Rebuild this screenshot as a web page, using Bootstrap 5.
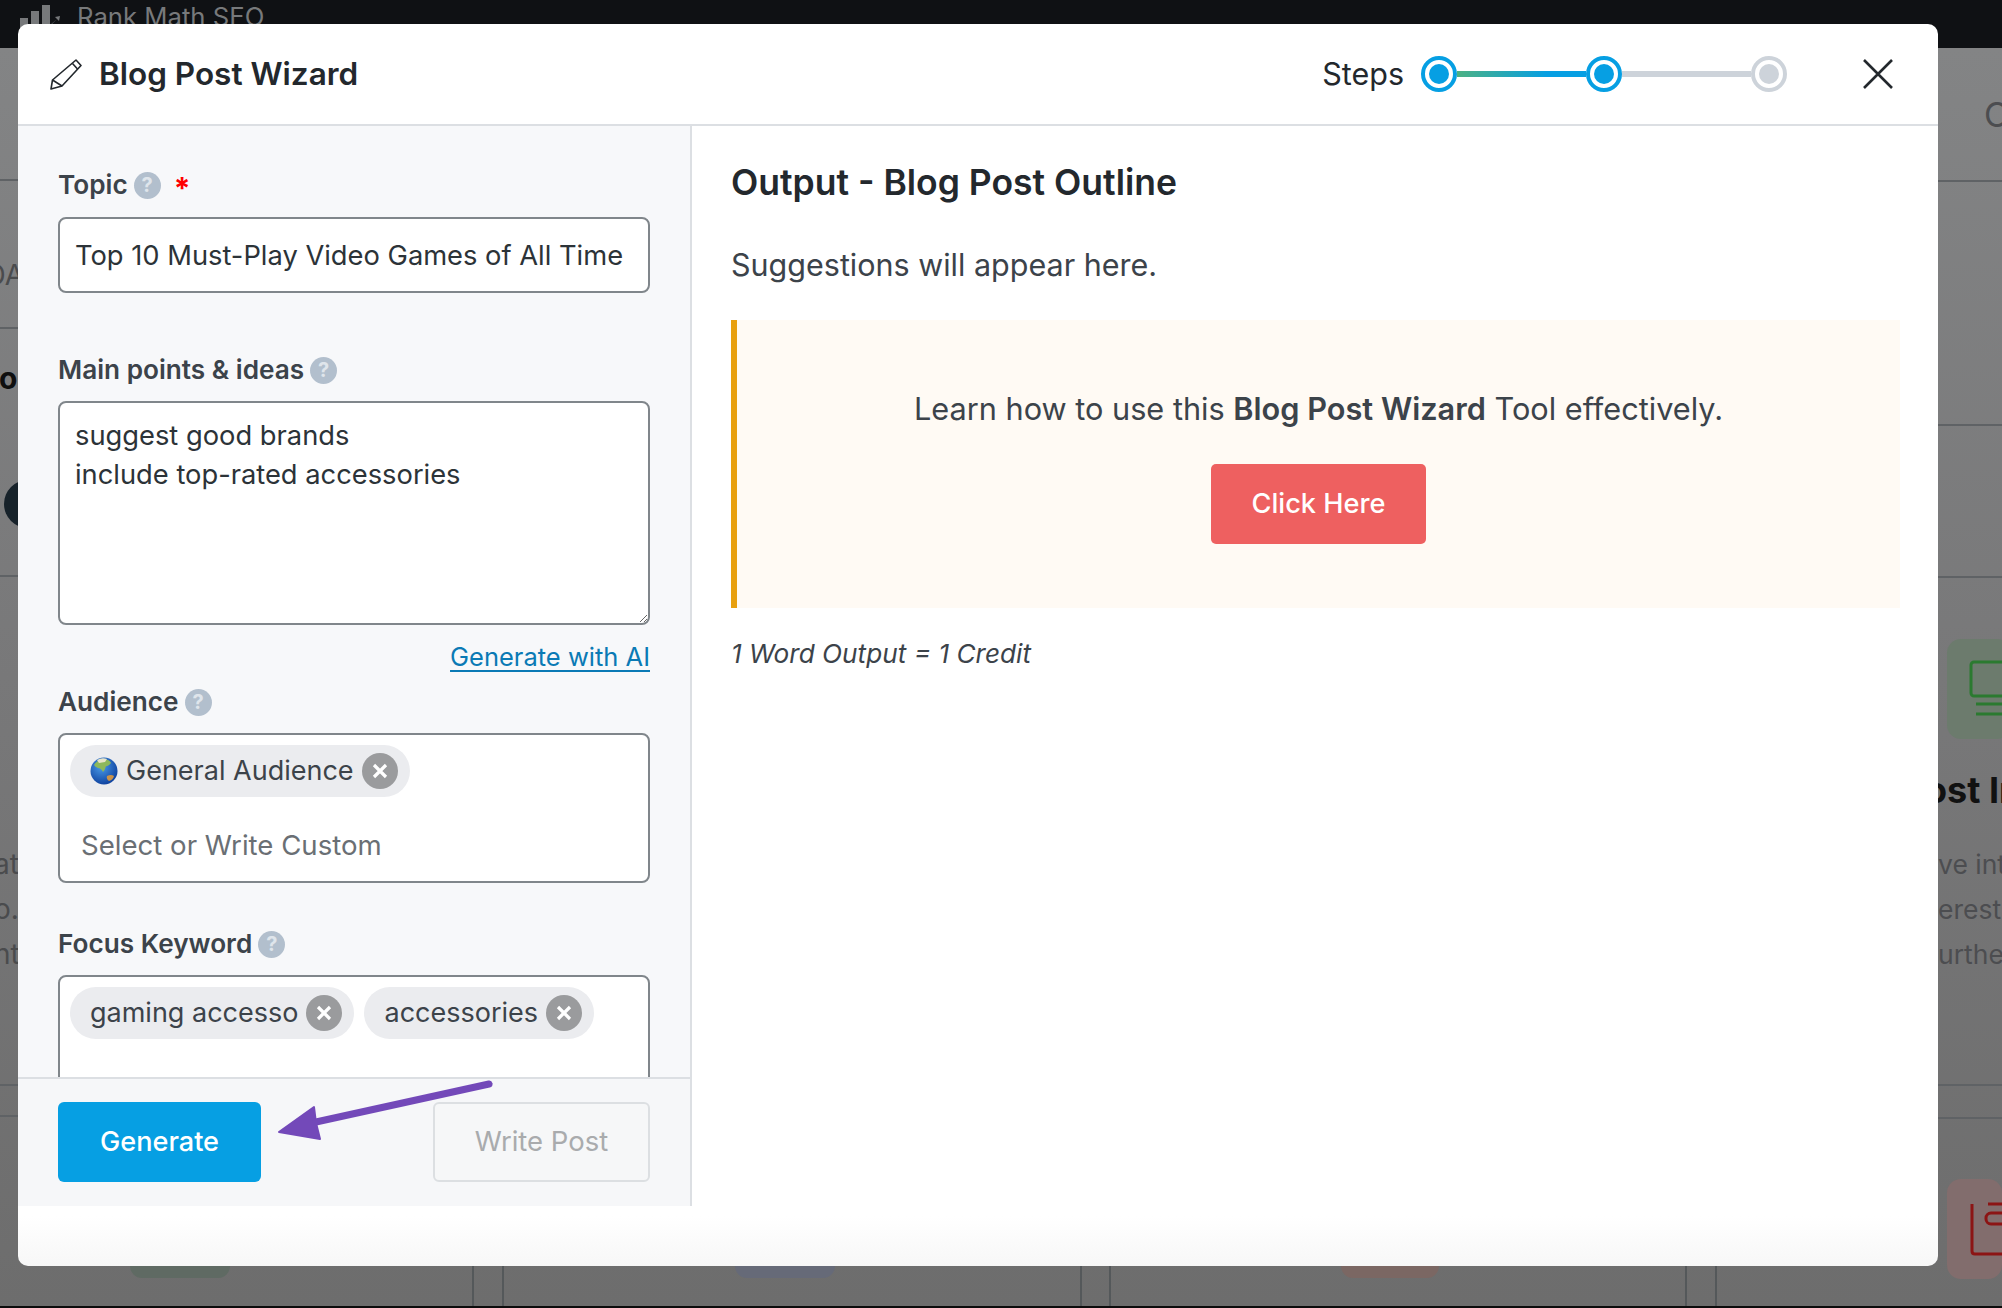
<!doctype html>
<html lang="en">
<head>
<meta charset="utf-8">
<title>Blog Post Wizard</title>
<link href="https://cdn.jsdelivr.net/npm/bootstrap@5.3.0/dist/css/bootstrap.min.css" rel="stylesheet">
<style>
html,body{margin:0;height:1308px;overflow:hidden;background:#000;font-family:Inter,"Liberation Sans",sans-serif;color:#3c434a}
.stage{width:2002px;height:1308px;position:relative;overflow:hidden}
.topstrip{height:48px;background:#0f1114;color:#77797b;padding-left:20px;gap:17px;font-size:25.7px;line-height:34px}
.page{height:1258px;background:linear-gradient(180deg,#838485 0%,#787879 50%,#6d6d6d 100%)}
.leftcol{width:24px;flex:none;overflow:hidden;color:#4a4b4d}
.midcol{flex:1 1 auto;min-width:0}
.rightcol{width:64px;flex:none;overflow:hidden;color:#4c4d50}
.sect{border-bottom:2px solid #5f6265;overflow:hidden;white-space:nowrap;flex:none}
.darkdot{width:48px;height:48px;border-radius:50%;background:#17222a;margin:84px 0 0 4px}
.boldfrag{font-weight:700;color:#0f0f0f;font-size:30px;line-height:36px;margin:31px 0 0 -1px}
.fragtxt{font-size:28px;line-height:45px;margin:0}
.fragwide{font-size:26.5px;padding-top:30px}
.tile{border-radius:14px;height:100px;width:100%}
.tile-green{background:#6c7b6d}
.tile-red{background:#826d6d}
.tailgrid{display:grid;grid-template-columns:448px 32px 576px 31px 574px 32px 1fr;height:40px;margin-top:auto}
.gapcell{border-left:2px solid #54585a;border-right:2px solid #54585a}
.tab-a,.tab-b,.tab-c{height:12px;border-radius:0 0 12px 12px;width:100px}
.tab-a{background:#5f6a63;margin-left:106px}
.tab-b{background:#666a78;margin-left:231px}
.tab-c{background:#7b6763;margin-left:230px;width:98px}
.wizard-modal{position:absolute;left:18px;top:24px;width:1920px;height:1242px;border:0;border-radius:10px;background:linear-gradient(180deg,#fff 96%,#f7f7f7 100%);overflow:hidden;display:block;color:#3c434a}
.wizard-head{height:102px;border-bottom:2px solid #dcdfe3;padding:0 44px 0 32px;border-radius:0}
.wizard-title{font-size:31.5px;font-weight:600;color:#23282d;margin:0 0 0 17px;line-height:40px}
.steps-label{font-size:30.5px;color:#23282d;margin-right:17px}
.stepdot{width:36px;height:36px;flex:none;border-radius:50%;border:4px solid #069fe3;background:#fff;padding:4px}
.stepdot::after{content:"";display:block;width:20px;height:20px;border-radius:50%;background:#069fe3}
.stepdot.todo{border-color:#cdd3da}
.stepdot.todo::after{background:#cdd3da}
.stepline{width:129px;height:6px;flex:none}
.stepline.done{background:linear-gradient(90deg,#4cb184,#069fe3 70%)}
.stepline.todo{background:#cdd3da}
.closer{margin-left:75px;width:32px;height:32px;background:none;border:0;padding:0;line-height:0}
.wizard-body{height:1080px}
.leftpane{width:674px;flex:none;background:#f7f8fa;border-right:2px solid #dcdfe3}
.scrollarea{height:951px;overflow:hidden;padding:44px 40px 0}
.fieldlabel{font-size:26.2px;font-weight:600;line-height:30px;color:#3c434a;margin:0;gap:6px}
.qmark{width:27px;height:27px;border-radius:50%;background:#b2bfcd;color:#dfe5eb;font-size:20px;font-weight:700;line-height:27px;text-align:center;flex:none}
.reqstar{color:#f00;font-size:30px;font-weight:700;line-height:30px;margin-left:7px;height:24px}
.wiz-input{height:76px;font-size:27.3px;line-height:38.5px;padding:15px 15px;border:2px solid #80868b;border-radius:8px;color:#2c3338;background:#fff;width:592px}
.wiz-area{height:224px;padding:14px 15px;margin-top:16px}
.mt-18{margin-top:17px}
.genlink{font-size:25.5px;line-height:30px;margin-top:17px;color:#0a7ab5;text-align:right;text-decoration:underline;display:block;text-underline-offset:4px}
.tagbox{border:2px solid #80868b;border-radius:8px;background:#fff;width:592px;padding:10px;font-size:27px;margin-top:16px}
.tagbox-tall{height:150px}
.tagrow{gap:10px}
.chip-tag{height:52px;border-radius:26px;background:#ebecef;padding:0 12px 0 20px;gap:8px;color:#3c434a;line-height:52px}
.chip-x{width:36px;height:36px;border-radius:50%;background:#9a9b9d;flex:none;line-height:0}
.placeholder-txt{color:#6a6f74;margin:28px 0 0 11px;line-height:40px;font-size:27.6px}
.leftfoot{border-top:2px solid #dcdfe3;background:#f6f7f9;padding:23px 40px 0;height:129px}
.btn-gen,.btn-gen:hover{width:203px;height:80px;background:#069fe3;color:#fff;border:0;border-radius:6px;font-size:27.1px;font-weight:500;padding:0}
.btn-write,.btn-write:disabled{width:217px;height:80px;background:#f6f7f8;color:#a9abad;border:2px solid #dcdfe2;border-radius:6px;font-size:27.5px;padding:0;opacity:1}
.rightpane{flex:1 1 auto;padding:35px 38px 0 39px}
.outhead{font-size:35.5px;font-weight:600;line-height:44px;color:#23282d;margin:0 0 39px}
.outsub{font-size:30.5px;line-height:42px;margin:0 0 34px;color:#3c434a}
.callout{height:288px;background:#fffaf4;border-left:6px solid #e8a00f;padding-top:71px}
.callout-txt{font-size:30.7px;line-height:36px;margin:0 0 37px;color:#3c434a}
.callout-txt b{font-weight:600}
.btn-click,.btn-click:hover{width:215px;height:80px;background:#ee6060;color:#fff;border:0;border-radius:5px;font-size:27.2px;font-weight:500;padding:0}
.note{font-size:26.2px;font-style:italic;line-height:34px;margin:29px 0 0;color:#3c434a}
.arrowlay{position:absolute;left:270px;top:1075px;width:230px;height:70px;pointer-events:none}
.darkend{height:2px;background:#0c0c0c}
</style>
</head>
<body>
<div class="stage">
  <div class="topstrip d-flex align-items-start">
    <svg width="40" height="30" viewBox="0 0 40 30" fill="#77797b"><rect x="0" y="18" width="8" height="12"/><rect x="11" y="11" width="8" height="19"/><rect x="22" y="5" width="8" height="25"/><path d="M29 26l8-7-2-2 5-1-1 5-2-2-8 8z"/></svg>
    <span>Rank Math SEO</span>
  </div>
  <div class="page d-flex">
    <div class="leftcol d-flex flex-column">
      <div class="sect" style="height:133px"></div>
      <div class="sect d-flex justify-content-end" style="height:148px"><span class="fragtxt" style="padding-top:72px">DA</span></div>
      <div class="sect d-flex flex-column" style="height:248px"><div class="boldfrag">o</div><div class="darkdot"></div></div>
      <div class="sect" style="height:509px"><p class="fragtxt" style="padding-top:265px;margin-left:-6px">at<br>o.<br>nt</p></div>
      <div class="sect" style="height:31px"></div>
    </div>
    <div class="midcol d-flex flex-column">
      <div class="tailgrid">
        <div><div class="tab-a"></div></div><div class="gapcell"></div>
        <div><div class="tab-b"></div></div><div class="gapcell"></div>
        <div><div class="tab-c"></div></div><div class="gapcell"></div><div></div>
      </div>
    </div>
    <div class="rightcol d-flex flex-column">
      <div class="sect" style="height:134px"><span class="fragtxt d-block" style="padding:44px 0 0 46px;font-size:34px;line-height:46px">C</span></div>
      <div class="sect" style="height:244px"></div>
      <div class="sect" style="height:152px"></div>
      <div class="sect" style="height:508px">
        <div class="tile tile-green" style="margin:61px 0 0 9px">
          <svg width="55" height="100" viewBox="0 0 55 100" fill="none" stroke="#2b7a30" stroke-width="3"><rect x="24" y="23" width="60" height="34" rx="3"/><path d="M29 65h30M29 75h30"/></svg>
        </div>
        <div style="font-weight:700;color:#111;font-size:36px;line-height:44px;margin:29px 0 0 -13px">ost In</div>
        <p class="fragtxt fragwide">ve int<br>erest,<br>urthe</p>
      </div>
      <div class="sect" style="height:33px"></div>
      <div style="padding:60px 0 0 9px"><div class="tile tile-red">
        <svg width="55" height="100" viewBox="0 0 55 100" fill="none" stroke="#8c1414" stroke-width="3"><path d="M25 25v47q0 3 3 3h30M41 25h30"/><rect x="39" y="34" width="40" height="11" rx="5"/></svg>
      </div></div>
    </div>
  </div>
  <div class="darkend"></div>

  <div class="wizard-modal modal-content">
    <div class="wizard-head d-flex align-items-center">
      <svg width="32" height="32" viewBox="0 0 32 32" fill="none" stroke="#23282d" stroke-width="1.6" stroke-linejoin="round"><path d="M1 31l1.5-9L26 2l5 5.500L12 28z"/><path d="M22.500 5.500l5 5.500M2.500 22l9.500 6"/></svg>
      <h1 class="wizard-title">Blog Post Wizard</h1>
      <div class="ms-auto d-flex align-items-center">
        <span class="steps-label">Steps</span>
        <span class="stepdot"></span><span class="stepline done"></span>
        <span class="stepdot"></span><span class="stepline todo"></span>
        <span class="stepdot todo"></span>
        <button class="closer" type="button" aria-label="Close"><svg width="32" height="32" viewBox="0 0 32 32" stroke="#23282d" stroke-width="2.6"><path d="M2 2l28 28M30 2L2 30"/></svg></button>
      </div>
    </div>
    <div class="wizard-body d-flex">
      <div class="leftpane d-flex flex-column">
        <div class="scrollarea">
          <div class="fieldlabel d-flex align-items-center">Topic <span class="qmark">?</span><span class="reqstar">*</span></div>
          <input class="form-control wiz-input mt-18" value="Top 10 Must-Play Video Games of All Time">
          <div class="fieldlabel d-flex align-items-center" style="margin-top:62px">Main points &amp; ideas <span class="qmark">?</span></div>
          <textarea class="form-control wiz-input wiz-area">suggest good brands
include top-rated accessories</textarea>
          <a class="genlink" href="#">Generate with AI</a>
          <div class="fieldlabel d-flex align-items-center" style="margin-top:15px">Audience <span class="qmark">?</span></div>
          <div class="tagbox tagbox-tall">
            <div class="d-flex tagrow">
              <span class="chip-tag d-inline-flex align-items-center">
                <svg width="28" height="28" viewBox="0 0 28 28"><defs><radialGradient id="sea" cx="40%" cy="35%" r="70%"><stop offset="0" stop-color="#4a9be8"/><stop offset="1" stop-color="#0c3e9c"/></radialGradient></defs><circle cx="14" cy="14" r="13.5" fill="url(#sea)"/><path d="M4 8q4-6 11-6 5 1 6 4-3 4-5 3-1 4-3 6-2-4-5-4-3-1-4-3z" fill="#8db85a"/><path d="M7 3q5-3 10-1l-2 3-6 1z" fill="#e8e4c8"/><path d="M17 19q4-2 7 0-1 4-5 5-3-2-2-5z" fill="#c9924a"/></svg>
                General Audience
                <span class="chip-x d-inline-flex align-items-center justify-content-center"><svg width="16" height="16" viewBox="0 0 16 16" stroke="#fff" stroke-width="3.2"><path d="M2 2l12 12M14 2L2 14"/></svg></span>
              </span>
            </div>
            <div class="placeholder-txt">Select or Write Custom</div>
          </div>
          <div class="fieldlabel d-flex align-items-center" style="margin-top:46px">Focus Keyword <span class="qmark">?</span></div>
          <div class="tagbox" style="height:200px">
            <div class="d-flex tagrow">
              <span class="chip-tag d-inline-flex align-items-center">gaming accesso
                <span class="chip-x d-inline-flex align-items-center justify-content-center"><svg width="16" height="16" viewBox="0 0 16 16" stroke="#fff" stroke-width="3.2"><path d="M2 2l12 12M14 2L2 14"/></svg></span></span>
              <span class="chip-tag d-inline-flex align-items-center">accessories
                <span class="chip-x d-inline-flex align-items-center justify-content-center"><svg width="16" height="16" viewBox="0 0 16 16" stroke="#fff" stroke-width="3.2"><path d="M2 2l12 12M14 2L2 14"/></svg></span></span>
            </div>
          </div>
        </div>
        <div class="leftfoot d-flex justify-content-between align-items-start">
          <button class="btn btn-gen" type="button">Generate</button>
          <button class="btn btn-write" type="button" disabled>Write Post</button>
        </div>
      </div>
      <div class="rightpane">
        <h2 class="outhead">Output - Blog Post Outline</h2>
        <p class="outsub">Suggestions will appear here.</p>
        <div class="callout d-flex flex-column align-items-center">
          <p class="callout-txt">Learn how to use this <b>Blog Post Wizard</b> Tool effectively.</p>
          <button class="btn btn-click" type="button">Click Here</button>
        </div>
        <p class="note">1 Word Output = 1 Credit</p>
      </div>
    </div>
  </div>

  <svg class="arrowlay" viewBox="0 0 230 70"><path d="M9 57L44 32l2 16 4 16z" fill="#7349b9" stroke="#7349b9" stroke-width="2" stroke-linejoin="round"/><path d="M46 47L219 9" stroke="#7349b9" stroke-width="7" stroke-linecap="round"/></svg>
</div>
<script src="https://cdn.jsdelivr.net/npm/bootstrap@5.3.0/dist/js/bootstrap.bundle.min.js"></script>
</body>
</html>
